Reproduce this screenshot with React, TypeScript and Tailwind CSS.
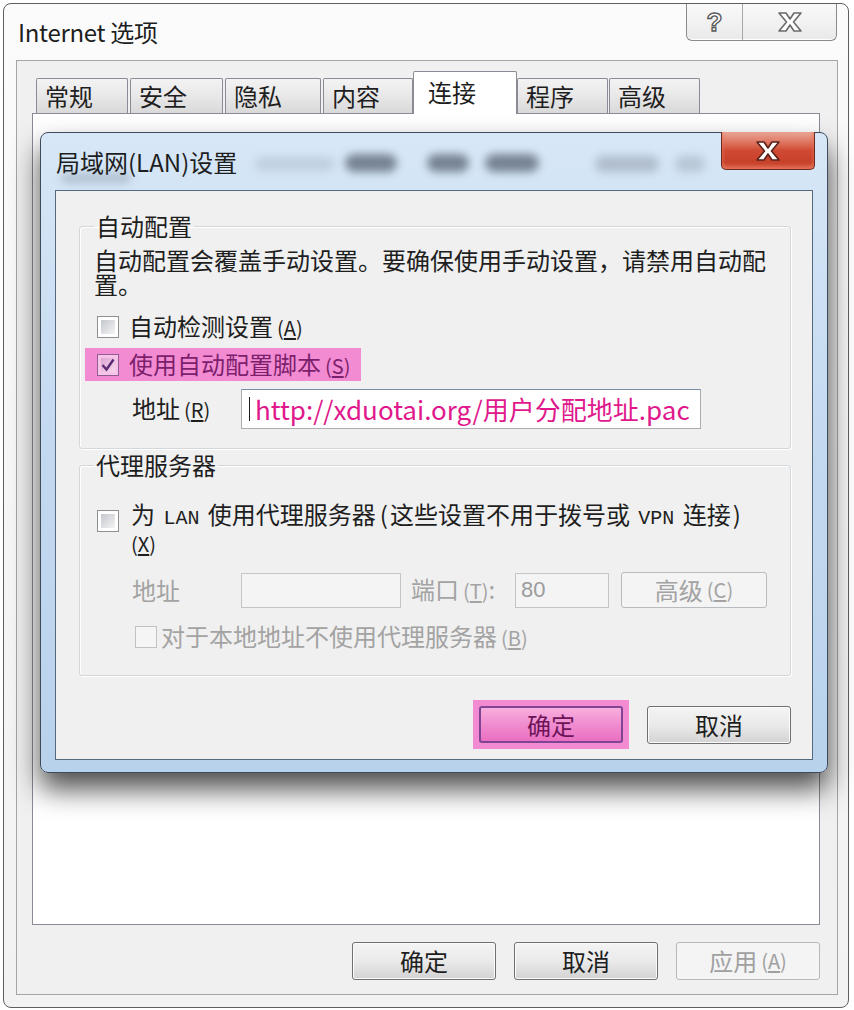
import React from "react"

const F = "font-['Noto_Sans_CJK_SC',sans-serif]"

const Acc: React.FC<{ k: string }> = ({ k }) => (
    <span className="ml-[4px] text-[20px]">(<span className="underline underline-offset-2">{k}</span>)</span>
)

const Check: React.FC<{ on?: boolean; off?: boolean; pink?: boolean }> = ({ on = false, off = false, pink = false }) => {
    if (off) return <span className="w-[22px] h-[22px] shrink-0 border border-[#c2c2c2] bg-[#f5f5f5]" />
    return (
        <span className={pink ? "w-[22px] h-[22px] shrink-0 flex p-[3px] border border-[#8d5f95] bg-[#f7c4e8]" : "w-[22px] h-[22px] shrink-0 flex p-[3px] border border-[#8e8f8f] bg-white"}>
            <span className={pink ? "flex-1 flex items-center justify-center bg-gradient-to-br from-[#dba6d2] to-[#f8d6ef]" : "flex-1 bg-gradient-to-br from-[#c4c8ce] to-[#f4f4f4]"}>
                {on && (
                    <svg width="16" height="16" viewBox="0 0 16 16" className="-m-[2px]">
                        <path d="M2.5 8 L6.5 12.5 L13.5 2.5" fill="none" stroke="#5b2a70" strokeWidth="2.4" />
                    </svg>
                )}
            </span>
        </span>
    )
}

const XGlyph: React.FC<{ fill: string; stroke: string }> = ({ fill, stroke }) => (
    <svg width="26" height="20" viewBox="0 0 26 20">
        <polygon points="2,1 9,1 13,7 17,1 24,1 16.5,10 24,19 17,19 13,13 9,19 2,19 9.5,10" fill={fill} stroke={stroke} strokeWidth="1.6" strokeLinejoin="round" />
    </svg>
)

const tabBase = "h-[35px] border border-b-0 border-[#898c95] rounded-t-[2px] bg-gradient-to-b from-[#f3f3f3] via-[#e8e8e8] to-[#d9d9d9] text-[24px] leading-[34px] pl-[8px] text-[#1e1e1e]"

const btnNormal = "h-[38px] w-[144px] rounded-[3px] border border-[#707070] bg-gradient-to-b from-[#f4f4f4] via-[#eaeaea] to-[#d3d3d3] shadow-[inset_0_0_0_1px_#fbfbfb] flex items-center justify-center text-[24px] leading-none text-[#1e1e1e]"

export default function App() {
    return (
        <div className={`relative w-[854px] h-[1010px] overflow-hidden bg-white pt-[3px] pl-[3px] ${F}`}>
            {/* Internet 选项 window */}
            <div className="w-[846px] h-[1005px] border border-[#5e5e5e] rounded-[8px] bg-gradient-to-b from-[#fbfbfb] to-[#f2f2f2] flex flex-col">
                <div className="h-[56px] flex items-center justify-between pl-[14px] pr-[11px]">
                    <span className="text-[24px] leading-[28px] text-[#1e1e1e] tracking-[-0.3px]">Internet 选项</span>
                    <div className="self-start flex h-[37px] border border-t-0 border-[#8a8a8a] rounded-b-[6px] bg-gradient-to-b from-[#fafafa] to-[#e9e9e9] shadow-[inset_0_-1px_0_#ffffff]">
                        <div className="w-[56px] flex items-center justify-center border-r border-[#a8a8a8]">
                            <span className="text-[26px] leading-none font-bold text-white [-webkit-text-stroke:1.4px_#5a5a5a] font-['Liberation_Sans',sans-serif]">?</span>
                        </div>
                        <div className="w-[93px] flex items-center justify-center">
                            <XGlyph fill="#ffffff" stroke="#6a6a6a" />
                        </div>
                    </div>
                </div>
                <div className="ml-[12px] w-[822px] h-[935px] border border-[#a5a5a5] bg-[#f0f0f0] pt-[10px] pl-[15px] flex flex-col">
                    <div className="flex items-end h-[42px] pl-[4px]">
                        <div className={`${tabBase} w-[92px] mr-[2px]`}>常规</div>
                        <div className={`${tabBase} w-[93px] mr-[2px]`}>安全</div>
                        <div className={`${tabBase} w-[96px] mr-[2px]`}>隐私</div>
                        <div className={`${tabBase} w-[90px]`}>内容</div>
                        <div className="relative z-10 -mb-px w-[104px] h-[43px] border border-b-0 border-[#898c95] rounded-t-[2px] bg-white text-[24px] leading-[40px] pl-[14px] text-[#1e1e1e]">连接</div>
                        <div className={`${tabBase} w-[91px] mr-[1px]`}>程序</div>
                        <div className={`${tabBase} w-[91px]`}>高级</div>
                    </div>
                    <div className="w-[788px] h-[812px] bg-white border border-[#898c95]" />
                    <div className="w-[788px] mt-[17px] flex justify-end gap-[18px]">
                        <div className={btnNormal}>确定</div>
                        <div className={btnNormal}>取消</div>
                        <div className="h-[38px] w-[144px] rounded-[3px] border border-[#b5b9bc] bg-[#f4f4f4] flex items-center justify-center text-[24px] leading-none text-[#a0a0a0]">
                            应用<Acc k="A" />
                        </div>
                    </div>
                </div>
            </div>

            {/* 局域网(LAN)设置 dialog, floating over the window */}
            <div className="absolute left-[40px] top-[132px] w-[788px] h-[641px] rounded-[8px] border border-[#3e4b5b] bg-gradient-to-b from-[#d7e7f7] via-[#c3d9f0] to-[#b9d2ec] shadow-[0_16px_28px_rgba(0,0,0,0.7)] px-[14px] flex flex-col">
                <div className="relative h-[57px] flex items-start justify-between">
                    <span className="absolute left-[200px] top-[24px] w-[80px] h-[14px] rounded-full bg-[#8f9aa8] opacity-30 blur-[5px]" />
                    <span className="absolute left-[290px] top-[21px] w-[52px] h-[18px] rounded-full bg-[#4f5a68] opacity-70 blur-[4px]" />
                    <span className="absolute left-[372px] top-[21px] w-[42px] h-[18px] rounded-full bg-[#4f5a68] opacity-70 blur-[4px]" />
                    <span className="absolute left-[430px] top-[21px] w-[54px] h-[18px] rounded-full bg-[#4f5a68] opacity-70 blur-[4px]" />
                    <span className="absolute left-[540px] top-[23px] w-[64px] h-[16px] rounded-full bg-[#7f8a98] opacity-45 blur-[5px]" />
                    <span className="absolute left-[620px] top-[23px] w-[30px] h-[16px] rounded-full bg-[#7f8a98] opacity-35 blur-[5px]" />
                    <span className="absolute left-[6px] top-[40px] w-[70px] h-[10px] rounded-full bg-[#6f7c8c] opacity-35 blur-[4px]" />
                    <span className="relative self-center pl-px text-[24px] leading-[28px] text-[#1e1e1e]">局域网(LAN)设置</span>
                    <div className="relative -mt-px -mr-[2px] w-[94px] h-[38px] rounded-b-[5px] border border-t-0 border-[#6b2a1e] bg-gradient-to-b from-[#eaa696] via-[#d04a33] to-[#c23a24] shadow-[inset_0_-3px_4px_#e8765c] flex items-center justify-center">
                        <XGlyph fill="#ffffff" stroke="#5b2218" />
                    </div>
                </div>
                <div className="h-[570px] border border-[#56687c] bg-[#f0f0f0] pt-[23px] pl-[23px] pr-[19px] flex flex-col text-[24px] text-[#1e1e1e]">
                    <fieldset className="w-[712px] border border-[#d2d7dc] rounded-[3px] shadow-[inset_1px_1px_0_#ffffff,1px_1px_0_#ffffff] pl-[14px] pb-[19px]">
                        <legend className="px-[2px] leading-[24px]">自动配置</legend>
                        <p className="mt-[10px] w-[680px] leading-[24px]">自动配置会覆盖手动设置。要确保使用手动设置，请禁用自动配置。</p>
                        <div className="mt-[20px] h-[22px] pl-[3px] flex items-center gap-[10px]">
                            <Check />
                            <span className="leading-[24px]">自动检测设置<Acc k="A" /></span>
                        </div>
                        <div className="mt-[10px] -ml-[9px] w-[276px] h-[33px] bg-[#f38bd3] pl-[12px] flex items-center gap-[10px]">
                            <Check on pink />
                            <span className="leading-[24px] text-[#7c1f6c]">使用自动配置脚本<Acc k="S" /></span>
                        </div>
                        <div className="mt-[8px] h-[40px] flex items-center">
                            <span className="pl-[38px] w-[147px] leading-[24px]">地址<Acc k="R" /></span>
                            <div className="w-[460px] h-[40px] border border-[#abadb3] border-t-[#7a8ea8] bg-white flex items-center pl-[7px]">
                                <span className="w-px h-[24px] bg-[#1e1e1e] mr-[5px]" />
                                <span className="text-[26px] leading-none text-[#e0188c] whitespace-nowrap">http://xduotai.org/用户分配地址.pac</span>
                            </div>
                        </div>
                    </fieldset>

                    <fieldset className="mt-[4px] w-[712px] border border-[#d2d7dc] rounded-[3px] shadow-[inset_1px_1px_0_#ffffff,1px_1px_0_#ffffff] pl-[14px] pb-[27px]">
                        <legend className="px-[2px] leading-[24px]">代理服务器</legend>
                        <div className="mt-[25px] pl-[3px] flex items-start gap-[12px]">
                            <span className="mt-[8px]"><Check /></span>
                            <span className="leading-[23px]">
                                为 <span className="mx-[3px] text-[20px] font-['Liberation_Mono',monospace]">LAN</span> 使用代理服务器<span className="ml-[4px] mr-[2px]">(</span>这些设置不用于拨号或 <span className="mx-[3px] text-[20px] font-['Liberation_Mono',monospace]">VPN</span> 连接<span className="ml-[2px]">)</span>
                                <br />
                                <span className="-ml-[4px]"><Acc k="X" /></span>
                            </span>
                        </div>
                        <div className="mt-[17px] h-[36px] flex items-center text-[#a3a3a3]">
                            <span className="pl-[38px] w-[147px] leading-[24px]">地址</span>
                            <div className="w-[160px] h-[35px] border border-[#c4c4c4] bg-[#f4f4f4]" />
                            <span className="ml-[10px] w-[104px] leading-[24px]">端口<Acc k="T" />:</span>
                            <div className="w-[94px] h-[35px] border border-[#c4c4c4] bg-[#f4f4f4] flex items-center pl-[5px] text-[22px] leading-none text-[#9c9c9c] font-['Liberation_Sans',sans-serif]">80</div>
                            <div className="ml-[12px] w-[146px] h-[36px] rounded-[3px] border border-[#b8bcbf] bg-[#f4f4f4] flex items-center justify-center leading-none">
                                高级<Acc k="C" />
                            </div>
                        </div>
                        <div className="mt-[18px] h-[22px] pl-[41px] flex items-center gap-[4px] text-[#a3a3a3]">
                            <Check off />
                            <span className="leading-[24px]">对于本地地址不使用代理服务器<Acc k="B" /></span>
                        </div>
                    </fieldset>

                    <div className="mt-[24px] pr-[2px] flex justify-end items-center gap-[18px]">
                        <div className="p-[6px] bg-[#f38bd3]">
                            <div className="h-[37px] w-[144px] rounded-[3px] border-2 border-[#7f4493] bg-gradient-to-b from-[#f8aede] via-[#f08ccf] to-[#ea6fc2] flex items-center justify-center text-[24px] leading-none text-[#6b1458]">确定</div>
                        </div>
                        <div className={btnNormal}>取消</div>
                    </div>
                </div>
            </div>
        </div>
    )
}
